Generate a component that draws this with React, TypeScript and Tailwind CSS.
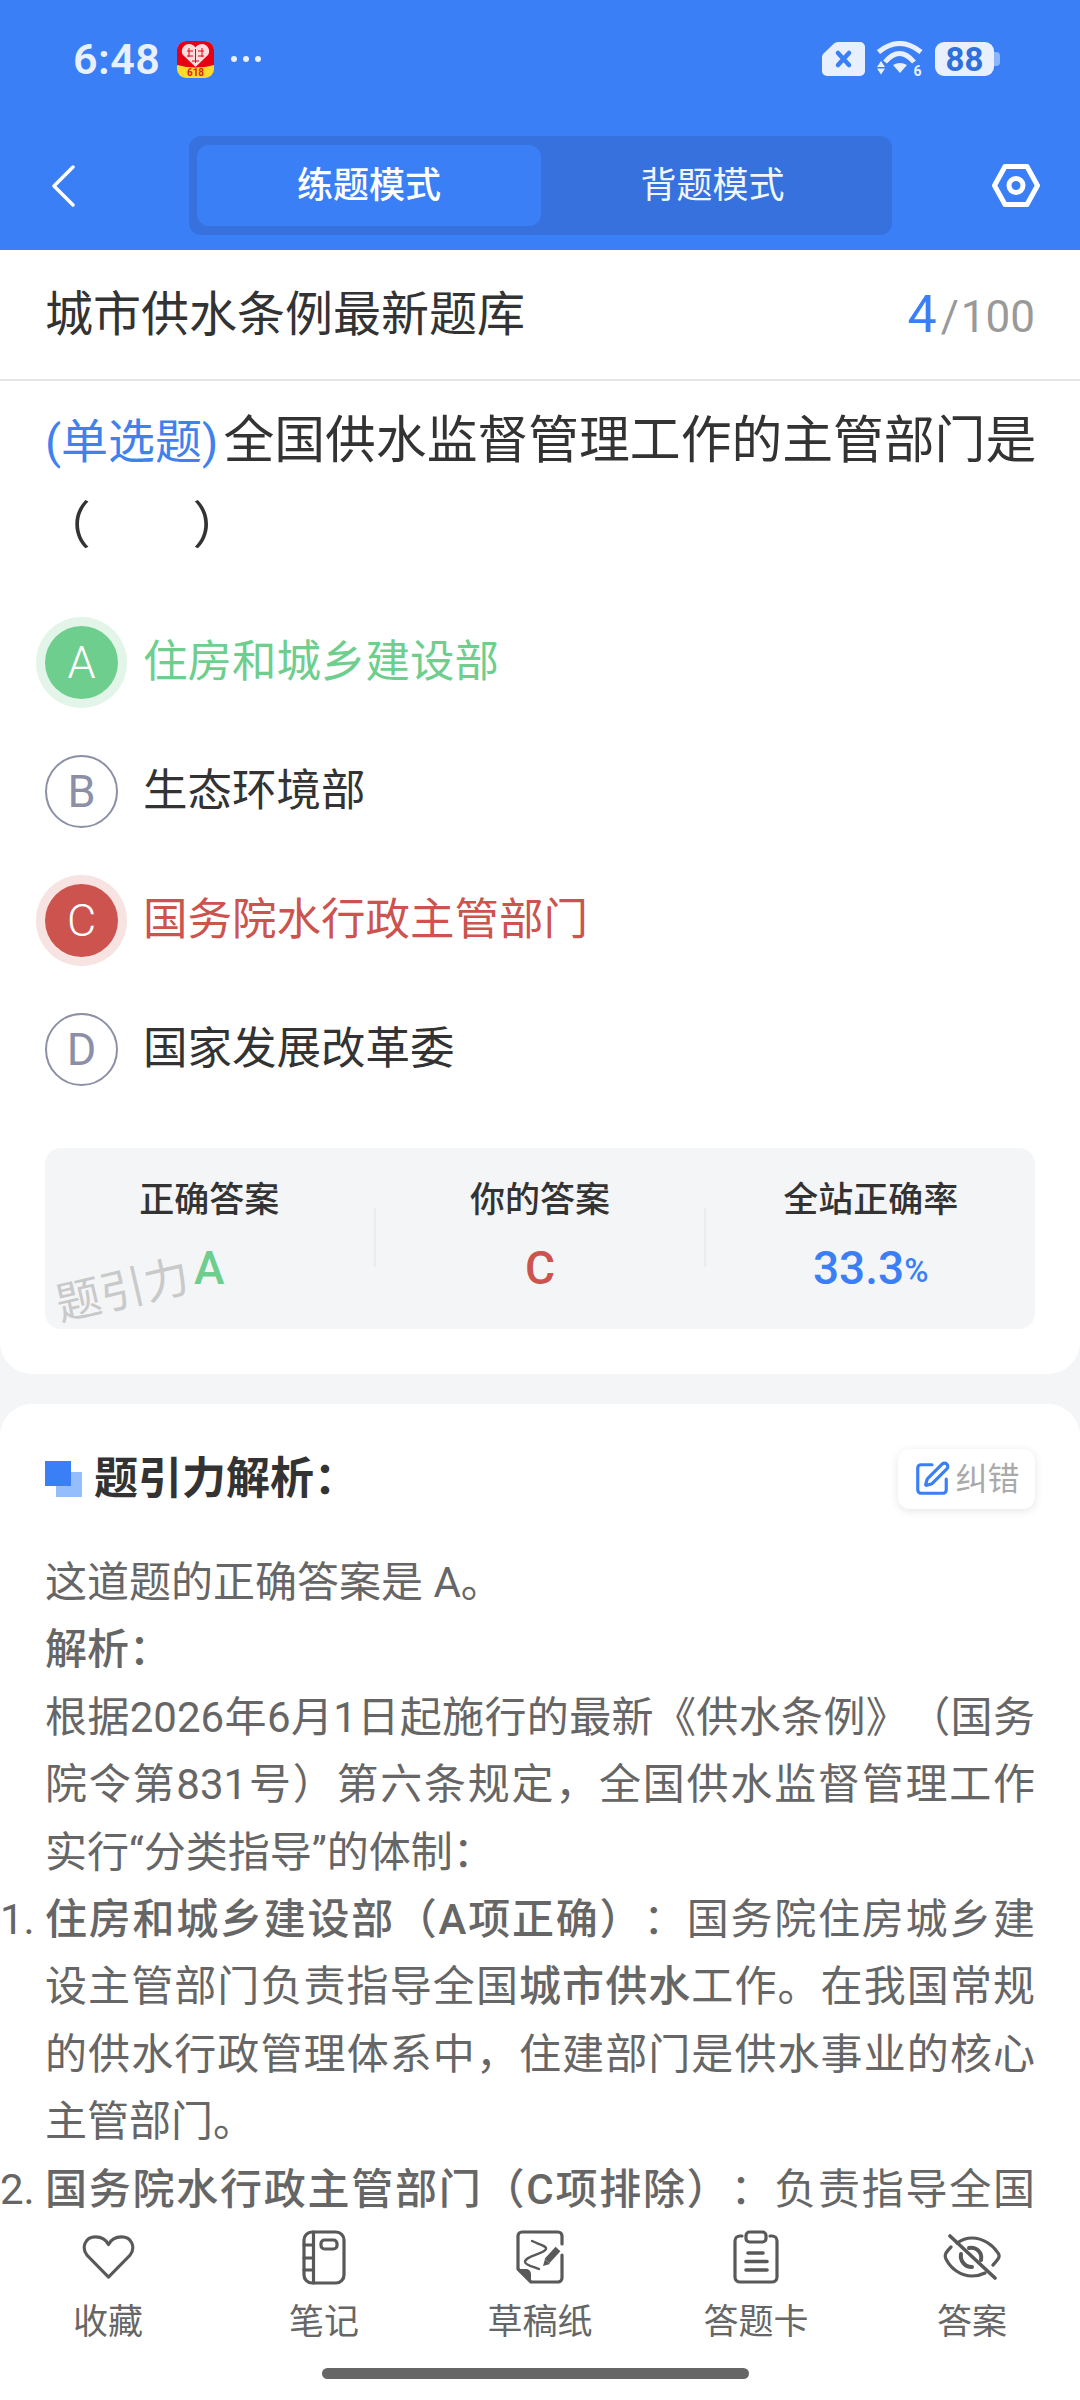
import { SquarePen } from "lucide-react";

const sans = "font-['Roboto','Noto_Sans_CJK_SC',sans-serif]";

function AppIcon() {
  return (
    <svg width="37" height="37" viewBox="0 0 37 37" className="ml-[17px]">
      <rect width="37" height="37" rx="9" fill="#ffd92e" />
      <path d="M0 9a9 9 0 0 1 9-9h19a9 9 0 0 1 9 9v15q-18 5-37 0z" fill="#e60012" />
      <path d="M18.5 26L6 14c-3-4 0-11 6-11 3 0 5 1.500 6.500 3.500C20 4.500 22 3 25 3c6 0 9 7 6 11z" fill="#f9dcdc" />
      <path d="M10 10h6M21 10h6M10 15h6M21 15h6M15 20h7M18.500 8v14M12 7v9M25 7v9" stroke="#e60012" strokeWidth="1" />
      <text x="18.500" y="35" textAnchor="middle" fontSize="10" fontWeight="700" fill="#d81e06" fontFamily="Roboto">618</text>
    </svg>
  );
}

function StatusIcons() {
  return (
    <div className="flex items-center">
      <svg width="43" height="34" viewBox="0 0 43 34">
        <path d="M12 1.500Q13.500 0 16 0h22a5 5 0 0 1 5 5v24a5 5 0 0 1-5 5H5a5 5 0 0 1-5-5V15q0-2 1.500-3.500z" fill="#e9f0fd" />
        <path d="M16 11l11 12M27 11L16 23" stroke="#3b7ff6" strokeWidth="4.500" strokeLinecap="round" />
      </svg>
      <svg width="46" height="36" viewBox="0 0 46 36" className="ml-[12px]">
        <path d="M1.500 11Q22.500-6 44 11" fill="none" stroke="#e9f0fd" strokeWidth="5" />
        <path d="M8 21Q22.500 4 37 21" fill="none" stroke="#e9f0fd" strokeWidth="5" />
        <path d="M16 24Q23 20 30 24L23 32z" fill="#e9f0fd" />
        <path d="M0 26l4-6 4 6zM0 27.500h8l-4 6z" fill="#e9f0fd" />
        <text x="40.500" y="35" textAnchor="middle" fontSize="14" fontWeight="700" fill="#e9f0fd" fontFamily="Roboto">6</text>
      </svg>
      <div className="ml-[12px] flex items-center">
        <div className="flex h-[34px] w-[59px] items-center justify-center rounded-[9px] bg-[#e9f0fd] text-[33px] font-bold leading-none text-[#2f6fdc]">
          88
        </div>
        <div className="h-[14px] w-[6px] rounded-r-[4px] bg-[#8db5fa]" />
      </div>
    </div>
  );
}

function Header() {
  return (
    <header className="h-[250px] shrink-0 bg-[#3b7ff6]">
      <div className="flex h-[118px] items-center justify-between pl-[73px] pr-[80px]">
        <div className="flex items-center">
          <span className="text-[43px] font-semibold leading-none tracking-[0.5px] text-[#e9f0fd]">6:48</span>
          <AppIcon />
          <div className="ml-[17px] flex gap-[6px]">
            <span className="h-[6px] w-[6px] rounded-full bg-[#e9f0fd]" />
            <span className="h-[6px] w-[6px] rounded-full bg-[#e9f0fd]" />
            <span className="h-[6px] w-[6px] rounded-full bg-[#e9f0fd]" />
          </div>
        </div>
        <StatusIcons />
      </div>
      <div className="mt-[18px] flex h-[99px] items-center">
        <svg width="24" height="42" viewBox="0 0 24 42" className="ml-[51px]">
          <path d="M22 2L3 21l19 19" fill="none" stroke="#fff" strokeWidth="3.500" strokeLinecap="round" strokeLinejoin="round" />
        </svg>
        <div className="ml-[114px] flex h-[99px] w-[703px] items-center rounded-[12px] bg-[#3671dd] px-[8px]">
          <div className="flex h-[81px] w-[344px] items-center justify-center rounded-[12px] bg-[#3b7ff6] text-[36px] font-medium text-white">
            练题模式
          </div>
          <div className="flex h-[81px] flex-1 items-center justify-center text-[36px] text-[#f1f5fe]">背题模式</div>
        </div>
        <svg width="48" height="43" viewBox="0 0 48 43" className="ml-[100px]">
          <path d="M13 2.500h22L45.500 21.500 35 40.500H13L2.500 21.500z" fill="none" stroke="#fff" strokeWidth="5" strokeLinejoin="round" />
          <circle cx="24" cy="21.500" r="7" fill="none" stroke="#fff" strokeWidth="5" />
        </svg>
      </div>
    </header>
  );
}

function Option({ letter, text, state }: { letter: string; text: string; state?: "right" | "wrong" }) {
  const circle =
    state === "right"
      ? "bg-[#6dce8d] font-light text-white ring-[9px] ring-[#e2f5e8]"
      : state === "wrong"
        ? "bg-[#cc534e] font-light text-white ring-[9px] ring-[#f6e3e2]"
        : "border-2 border-[#8c90a6] font-normal text-[#8c90a6]";
  const label = state === "right" ? "text-[#6dce8d]" : state === "wrong" ? "text-[#cc534e]" : "text-[#333333]";
  return (
    <div className="flex h-[129px] items-center">
      <div className={`flex h-[73px] w-[73px] items-center justify-center rounded-full text-[45px] ${circle}`}>
        {letter}
      </div>
      <span className={`ml-[25px] text-[44.500px] ${label}`}>{text}</span>
    </div>
  );
}

function Stat({ label, children }: { label: string; children: React.ReactNode }) {
  return (
    <div className="flex flex-1 flex-col items-center">
      <span className="mt-[34px] text-[35px] font-medium leading-[38px] text-[#333333]">{label}</span>
      <div className="mt-[23px] flex h-[50px] items-center font-medium">{children}</div>
    </div>
  );
}

function QuestionCard() {
  return (
    <section className="rounded-b-[32px] bg-white px-[45px] pb-[45px]">
      <p className="whitespace-nowrap pt-[17px] text-[50.800px] leading-[85px] text-[#333333]">
        <span className="mr-[5px] text-[47px] text-[#3f82ee]">(单选题)</span>全国供水监督管理工作的主管部门是
        <br />
        <span className="-ml-[5px] inline-block">（　　）</span>
      </p>
      <div className="mt-[29px]">
        <Option letter="A" text="住房和城乡建设部" state="right" />
        <Option letter="B" text="生态环境部" />
        <Option letter="C" text="国务院水行政主管部门" state="wrong" />
        <Option letter="D" text="国家发展改革委" />
      </div>
      <div className="relative mt-[34px] flex h-[181px] overflow-hidden rounded-[16px] bg-[#f4f5f7]">
        <Stat label="正确答案">
          <span className="text-[46px] text-[#6dce8d]">A</span>
        </Stat>
        <div className="mt-[60px] h-[59px] w-[2px] bg-[#ebecf0]" />
        <Stat label="你的答案">
          <span className="text-[46px] text-[#cc534e]">C</span>
        </Stat>
        <div className="mt-[60px] h-[59px] w-[2px] bg-[#ebecf0]" />
        <Stat label="全站正确率">
          <span className="text-[46px] text-[#3b7ff6]">33.3</span>
          <span className="mt-[6px] text-[33px] text-[#3b7ff6]">%</span>
        </Stat>
        <span className="absolute left-[10px] top-[120px] -rotate-[13deg] text-[45px] leading-none text-[#c9c9c9]">题引力</span>
      </div>
    </section>
  );
}

function AnalysisCard() {
  return (
    <section className="mt-[30px] rounded-t-[32px] bg-white px-[45px] pt-[45px]">
      <div className="flex h-[60px] items-center justify-between">
        <div className="flex items-center">
          <div className="relative h-[36px] w-[37px]">
            <div className="absolute bottom-0 right-0 h-[25px] w-[26px] bg-[#93bdfb]" />
            <div className="absolute left-0 top-0 h-[25px] w-[26px] bg-[#3b7ff6]" />
          </div>
          <h2 className="ml-[12px] text-[44px] font-bold leading-none text-[#333333]">题引力解析：</h2>
        </div>
        <div className="flex h-[60px] w-[137px] items-center justify-center rounded-[12px] bg-white shadow-[0_2px_10px_rgba(0,0,0,0.1)]">
          <SquarePen size={38} strokeWidth={2} className="text-[#3b7ff6]" />
          <span className="ml-[4px] text-[32px] text-[#aaaaaa]">纠错</span>
        </div>
      </div>
      <div className="mt-[40px] text-justify text-[42px] leading-[67.400px] text-[#666666] [text-spacing-trim:space-all]">
        <p>这道题的正确答案是 A。</p>
        <p className="font-medium">解析：</p>
        <p>根据2026年6月1日起施行的最新《供水条例》（国务院令第831号）第六条规定，全国供水监督管理工作实行“分类指导”的体制：</p>
        <ol className="list-decimal">
          <li>
            <span className="font-medium">住房和城乡建设部（A项正确）</span>：国务院住房城乡建设主管部门负责指导全国
            <span className="font-medium">城市供水</span>工作。在我国常规的供水行政管理体系中，住建部门是供水事业的核心主管部门。
          </li>
          <li className="[text-align-last:justify]">
            <span className="font-medium">国务院水行政主管部门（C项排除）</span>：负责指导全国
          </li>
        </ol>
      </div>
    </section>
  );
}

function NavItem({ label, children }: { label: string; children: React.ReactNode }) {
  return (
    <div className="flex flex-1 flex-col items-center">
      <div className="flex h-[56px] items-center justify-center">{children}</div>
      <span className="mt-[16px] text-[35px] leading-[44px] text-[#666666]">{label}</span>
    </div>
  );
}

function BottomBar() {
  const stroke = { fill: "none", stroke: "#595959", strokeWidth: 3.2, strokeLinecap: "round", strokeLinejoin: "round" } as const;
  return (
    <footer className="h-[185px] shrink-0 bg-white pt-[14px]">
      <div className="flex">
        <NavItem label="收藏">
          <svg width="53" height="46" viewBox="0 0 55 48">
            <path d="M27.500 45L5 22C-1 14 3 3 14 3c6 0 11 3 13.500 8C30 6 35 3 41 3c11 0 15 11 9 19z" {...stroke} />
          </svg>
        </NavItem>
        <NavItem label="笔记">
          <svg width="44" height="55" viewBox="0 0 44 55">
            <rect x="2" y="2" width="40" height="51" rx="8" {...stroke} />
            <path d="M11.500 2v51M2 15h9.500M2 28h9.500M2 40h9.500" {...stroke} />
            <rect x="19" y="10" width="16" height="9" rx="3.500" {...stroke} />
          </svg>
        </NavItem>
        <NavItem label="草稿纸">
          <svg width="48" height="54" viewBox="0 0 48 54">
            <path d="M46 14V6a4 4 0 0 0-4-4H6a4 4 0 0 0-4 4v33l13 13h27a4 4 0 0 0 4-4V25" {...stroke} />
            <path d="M3 39h7a5 5 0 0 1 5 5v7z" fill="#595959" />
            <path d="M16 11c6 3 15 5 14 8-2 5-21 7-21 13 0 3 9 5 14 7" fill="none" stroke="#595959" strokeWidth="2.400" strokeLinecap="round" />
            <path d="M42 19L31 31" fill="none" stroke="#595959" strokeWidth="6.500" />
            <path d="M29 29l5 5-7 2z" fill="#595959" />
          </svg>
        </NavItem>
        <NavItem label="答题卡">
          <svg width="46" height="54" viewBox="0 0 46 54">
            <path d="M9 6H7a5 5 0 0 0-5 5v36a5 5 0 0 0 5 5h32a5 5 0 0 0 5-5V11a5 5 0 0 0-5-5h-2" {...stroke} />
            <rect x="13" y="2" width="20" height="10" rx="3.500" {...stroke} />
            <path d="M15 23h15M13 31.500h21M13 40h21" {...stroke} strokeWidth="3.600" />
          </svg>
        </NavItem>
        <NavItem label="答案">
          <svg width="58" height="46" viewBox="0 0 58 46">
            <path d="M14 9Q21 4 29 4c11 0 21 7 26 15 1.500 2 1.500 4 0 6-1.500 2-3 4-5 6M42 39q-6 3-13 3C18 42 8 35 3 25c-1-2-1-4 0-6q2-3 5-6" {...stroke} />
            <path d="M26 14a10 10 0 0 1 12 12M18 20a11 11 0 0 0 11 13" {...stroke} strokeWidth="4" />
            <path d="M7 2l45 42" {...stroke} strokeWidth="3.600" />
          </svg>
        </NavItem>
      </div>
      <div className="ml-[322px] mt-[23px] h-[11px] w-[427px] rounded-full bg-[#666666]" />
    </footer>
  );
}

export default function App() {
  return (
    <div className={`flex h-[2400px] w-[1080px] flex-col overflow-hidden bg-[#f4f5f7] ${sans}`}>
      <Header />
      <main className="min-h-0 flex-1 overflow-hidden">
        <div className="flex h-[131px] items-center justify-between border-b-2 border-[#e5e5e5] bg-white px-[45px]">
          <h1 className="text-[48px] font-normal text-[#333333]">城市供水条例最新题库</h1>
          <div className="flex items-baseline text-[44px] text-[#999999]">
            <span className="text-[52px] text-[#3b7ff6]">4</span>
            <span className="ml-[4px]">/</span>
            <span className="ml-[2px]">100</span>
          </div>
        </div>
        <QuestionCard />
        <AnalysisCard />
      </main>
      <BottomBar />
    </div>
  );
}
